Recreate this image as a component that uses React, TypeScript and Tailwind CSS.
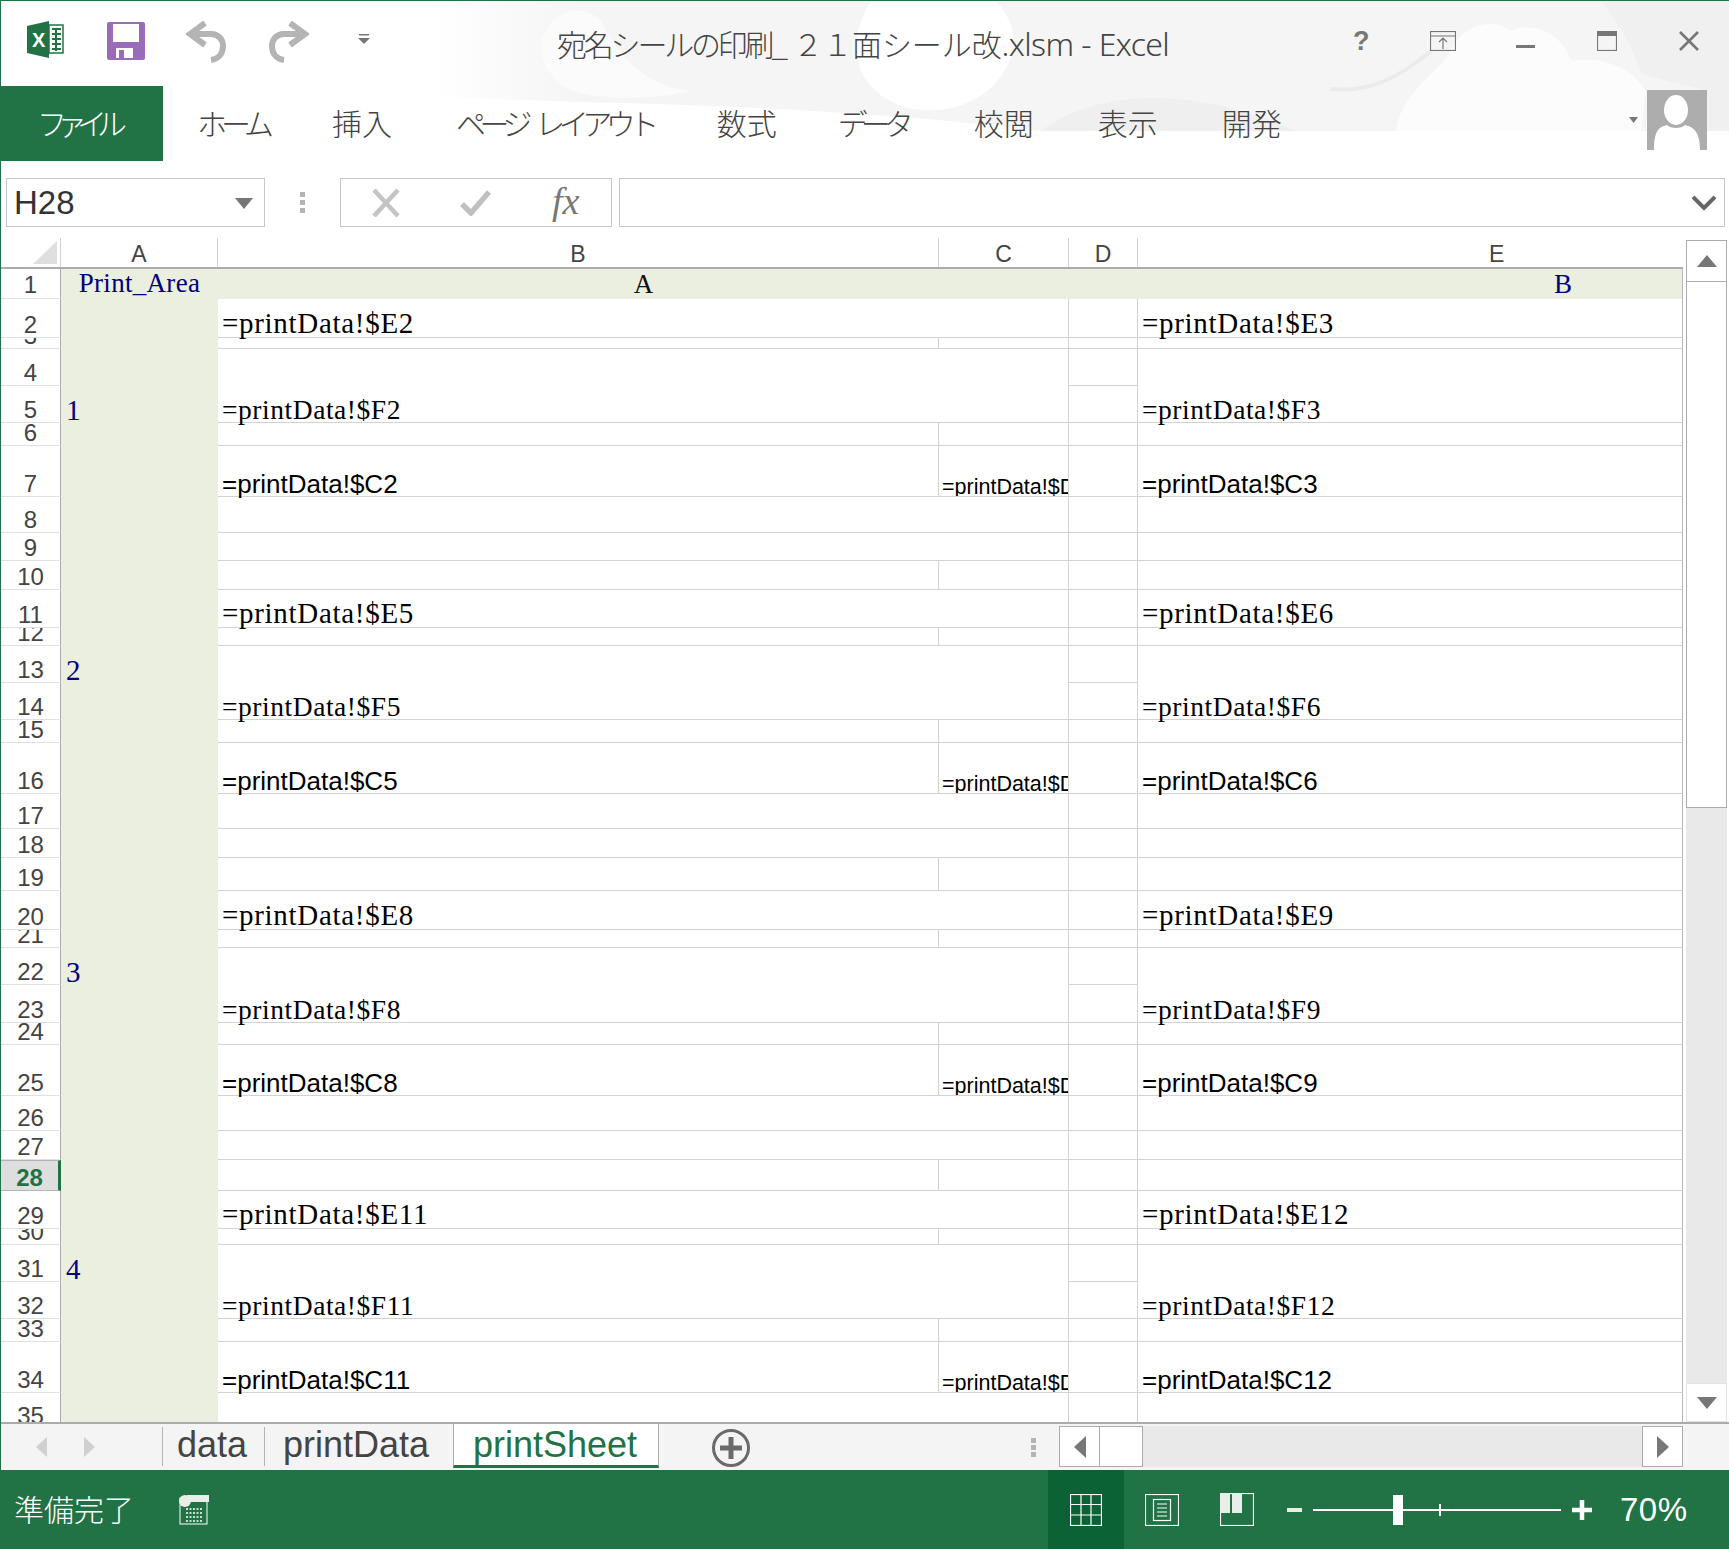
import React from 'react'

const SERIF = "font-['Liberation_Serif',serif]"
const SANS = "font-['Liberation_Sans',sans-serif]"
const JP = "font-['Noto_Sans_CJK_JP','Liberation_Sans',sans-serif]"

type Row = {
  n: number
  h: number
  split?: boolean
  noLine?: boolean
  kind?: 'E' | 'F' | 'C'
  k?: number
  label?: string
}

const ROWS: Row[] = [
  { n: 2, h: 39, kind: 'E', k: 2 },
  { n: 3, h: 11, split: true },
  { n: 4, h: 37, noLine: true },
  { n: 5, h: 37, kind: 'F', k: 2, label: '1' },
  { n: 6, h: 23, split: true },
  { n: 7, h: 51, split: true, kind: 'C', k: 2 },
  { n: 8, h: 36 },
  { n: 9, h: 28 },
  { n: 10, h: 29, split: true },
  { n: 11, h: 38, kind: 'E', k: 5 },
  { n: 12, h: 18, split: true },
  { n: 13, h: 37, noLine: true, label: '2' },
  { n: 14, h: 37, kind: 'F', k: 5 },
  { n: 15, h: 23, split: true },
  { n: 16, h: 51, split: true, kind: 'C', k: 5 },
  { n: 17, h: 35 },
  { n: 18, h: 29 },
  { n: 19, h: 33, split: true },
  { n: 20, h: 39, kind: 'E', k: 8 },
  { n: 21, h: 18, split: true },
  { n: 22, h: 37, noLine: true, label: '3' },
  { n: 23, h: 38, kind: 'F', k: 8 },
  { n: 24, h: 22, split: true },
  { n: 25, h: 51, split: true, kind: 'C', k: 8 },
  { n: 26, h: 35 },
  { n: 27, h: 29 },
  { n: 28, h: 31, split: true },
  { n: 29, h: 38, kind: 'E', k: 11 },
  { n: 30, h: 16, split: true },
  { n: 31, h: 37, noLine: true, label: '4' },
  { n: 32, h: 37, kind: 'F', k: 11 },
  { n: 33, h: 23, split: true },
  { n: 34, h: 51, split: true, kind: 'C', k: 11 },
  // taller than what shows: the tab bar cuts it off
  { n: 35, h: 36 },
]

const TABS = [
  { label: 'ホーム', cls: 'tracking-[-6px]' },
  { label: '挿入', cls: '' },
  { label: 'ページ レイアウト', cls: 'tracking-[-6.5px] [word-spacing:9px]' },
  { label: '数式', cls: '' },
  { label: 'データ', cls: '-ml-[3px] pr-[3px] tracking-[-7px]' },
  { label: '校閲', cls: '' },
  { label: '表示', cls: '' },
  { label: '開発', cls: '' },
]

function CloudTexture() {
  return (
    <svg className="absolute left-0 top-0" width="1729" height="130" viewBox="0 0 1729 130">
      <defs>
        <linearGradient id="fade" x1="430" x2="580" y1="0" y2="0" gradientUnits="userSpaceOnUse">
          <stop offset="0" stopColor="#ffffff" />
          <stop offset="1" stopColor="#f5f5f5" />
        </linearGradient>
      </defs>
      <rect x="430" width="1299" height="130" fill="url(#fade)" />
      <path d="M430 130V95C600 105 800 100 1040 130Z" fill="#fff" />
      <path d="M870 0C845 40 850 85 900 105C950 120 1000 95 1012 50C1016 30 1005 10 995 0Z" fill="#fff" />
      <path d="M540 40C550 10 580 0 600 20C615 50 640 85 690 90C640 100 590 100 560 85C545 70 538 55 540 40Z" fill="#fbfbfb" />
      <path d="M1395 130C1400 90 1440 70 1450 50C1460 25 1490 15 1510 30C1530 20 1560 30 1570 60C1600 55 1630 65 1645 90L1640 130Z" fill="#fcfcfc" />
      <path d="M1040 130C1095 88 1190 84 1295 130Z" fill="#efefef" />
      <path d="M1600 0H1729V130H1706V90C1680 82 1660 80 1640 72C1630 40 1615 20 1600 0Z" fill="#f0f0f0" />
      <path d="M1330 88C1370 92 1400 75 1430 50" fill="none" stroke="#ebebeb" strokeWidth="4" />
    </svg>
  )
}

function QuickAccess() {
  return (
    <div className="flex w-[556px] items-start pt-[20px]">
      <svg className="ml-[26px]" width="37" height="38" viewBox="0 0 37 38">
        <path d="M22 4H36V32H22Z" fill="#fff" stroke="#217346" strokeWidth="1.5" />
        <path d="M25 8H34M25 13H34M25 18H34M25 23H34M25 28H34M29 7V30" stroke="#217346" strokeWidth="2" fill="none" />
        <path d="M0 5L22 0V37L0 32Z" fill="#217346" />
        <text x="5" y="26" fill="#fff" fontSize="20" fontWeight="700" fontFamily="Liberation Sans">X</text>
      </svg>
      <svg className="ml-[43px] mt-[1px]" width="38" height="38" viewBox="0 0 38 38">
        <path d="M2 0H36Q38 0 38 2V36Q38 38 36 38H2Q0 38 0 36V2Q0 0 2 0Z" fill="#9a6bb8" />
        <rect x="6" y="2" width="26" height="18" fill="#fff" />
        <rect x="9" y="26" width="17" height="10" fill="#fff" />
        <rect x="12" y="28" width="5" height="8" fill="#9a6bb8" />
      </svg>
      <svg className="ml-[41px]" width="44" height="42" viewBox="0 0 44 42" fill="none" stroke="#b4b4b4" strokeWidth="6">
        <path d="M19 2L4 13L19 24" />
        <path d="M5 13H25C33 13 37 19 37 25C37 32 33 38 25 39" />
      </svg>
      <svg className="ml-[35px]" width="44" height="42" viewBox="0 0 44 42" fill="none" stroke="#b4b4b4" strokeWidth="6">
        <path d="M25 2L40 13L25 24" />
        <path d="M39 13H19C11 13 7 19 7 25C7 32 11 38 19 39" />
      </svg>
      <svg className="ml-[49px] mt-[13px]" width="13" height="10" viewBox="0 0 13 10">
        <rect x="1" y="0" width="10" height="1.5" fill="#777" />
        <path d="M0 4H12L6 10Z" fill="#777" />
      </svg>
    </div>
  )
}

function WindowControls() {
  return (
    <div className="flex w-[374px] items-start pt-[27px] text-[#777]">
      <span className={`${SANS} ml-[11px] w-[20px] text-[27px] font-bold leading-[27px]`}>?</span>
      <svg className="ml-[57px] mt-[3px]" width="26" height="20" viewBox="0 0 26 20" fill="none" stroke="#777" strokeWidth="1.2">
        <rect x="0.5" y="0.5" width="25" height="19" />
        <path d="M0 5H26M13 18V8M9 11L13 7L17 11" />
      </svg>
      <div className="ml-[60px] mt-[17px] h-[3px] w-[19px] bg-[#777]" />
      <svg className="ml-[62px] mt-[3px]" width="20" height="20" viewBox="0 0 20 20" fill="none" stroke="#777" strokeWidth="1.2">
        <rect x="0.5" y="0.5" width="19" height="19" />
        <rect x="0" y="0" width="20" height="5" fill="#777" stroke="none" />
      </svg>
      <svg className="ml-[62px] mt-[3px]" width="20" height="20" viewBox="0 0 20 20" fill="none" stroke="#777" strokeWidth="2.6">
        <path d="M1 1L19 19M19 1L1 19" />
      </svg>
    </div>
  )
}

function RibbonTabs() {
  return (
    <div className="flex h-[75px] items-stretch">
      <div className={`${JP} flex w-[162px] items-center bg-[#217346] pb-[2px] pl-[36px] text-[30px] font-light tracking-[-10px] text-white`}>
        ファイル
      </div>
      <div className="ml-[34px] flex items-center gap-[64px] pb-[2px]">
        {TABS.map((t) => (
          <span key={t.label} className={`${JP} text-[30px] font-light whitespace-nowrap text-[#444] ${t.cls}`}>
            {t.label}
          </span>
        ))}
      </div>
      <div className="ml-auto flex items-start pt-[4px]">
        <svg className="mt-[27px]" width="9" height="6" viewBox="0 0 9 6">
          <path d="M0 0H9L4.5 6Z" fill="#777" />
        </svg>
        <svg className="ml-[9px] mr-[22px]" width="60" height="60" viewBox="0 0 60 60">
          <rect width="60" height="60" fill="#adadad" />
          <ellipse cx="29" cy="20" rx="12" ry="15" fill="#fff" />
          <path d="M7 60C7 44 10 37 20 35C24 39 34 39 38 35C48 37 53 44 53 60Z" fill="#fff" />
        </svg>
      </div>
    </div>
  )
}

function FormulaBar() {
  return (
    <div className="flex h-[77px] items-start pl-[5px] pt-[17px]">
      <div className={`${SANS} flex h-[49px] w-[259px] items-center border border-[#c6c6c6] bg-white pl-[7px] pt-[1px] text-[33px] text-[#333]`}>
        H28
        <svg className="ml-auto mr-[11px]" width="18" height="11" viewBox="0 0 18 11">
          <path d="M0 0H18L9 11Z" fill="#777" />
        </svg>
      </div>
      <div className="ml-[35px] mt-[14px] flex w-[7px] flex-col gap-[3px]">
        <span className="h-[5px] w-[5px] bg-[#b5b5b5]" />
        <span className="h-[5px] w-[5px] bg-[#b5b5b5]" />
        <span className="h-[5px] w-[5px] bg-[#b5b5b5]" />
      </div>
      <div className="ml-[33px] flex h-[49px] w-[272px] items-center border border-[#c6c6c6] bg-white">
        <svg className="ml-[30px]" width="30" height="28" viewBox="0 0 30 28" fill="none" stroke="#c4c4c4" strokeWidth="4.5">
          <path d="M3 1L27 27M27 1L3 27" />
        </svg>
        <svg className="ml-[59px]" width="32" height="26" viewBox="0 0 32 26" fill="none" stroke="#c0c0c0" strokeWidth="5.5">
          <path d="M2 14L11 23L29 2" />
        </svg>
        <span className={`${SERIF} ml-[60px] pb-[3px] text-[38px] italic leading-none text-[#777]`}>fx</span>
      </div>
      <div className="ml-[7px] flex h-[49px] w-[1106px] items-center border border-[#c6c6c6] bg-white">
        <svg className="ml-auto mr-[8px]" width="24" height="16" viewBox="0 0 24 16" fill="none" stroke="#666" strokeWidth="4">
          <path d="M1 2L12 13L23 2" />
        </svg>
      </div>
    </div>
  )
}

function ColHead({ w, label, cls = '' }: { w: string; label: string; cls?: string }) {
  return (
    <div className={`${SANS} flex h-full ${w} items-end justify-center text-[23px] leading-[25px] text-[#444] ${cls}`}>
      {label}
    </div>
  )
}

function SheetRow({ r }: { r: Row }) {
  const selected = r.n === 28
  const line = 'border-b border-[#d2d2d2]'
  const mainLine = r.noLine ? '' : line
  let mainText = ''
  let rightText = ''
  if (r.kind && r.k) {
    mainText = `=printData!$${r.kind}${r.k}`
    rightText = `=printData!$${r.kind}${r.k + 1}`
  }
  const textCls =
    r.kind === 'E'
      ? `${SERIF} text-[29px] leading-[27px] tracking-[0.7px]`
      : r.kind === 'F'
        ? `${SERIF} text-[27.5px] leading-[24px] tracking-[0.55px]`
        : `${SANS} text-[26px] leading-[23px]`
  const cell = 'flex h-full items-end pl-[4px] whitespace-nowrap text-black'

  return (
    <div className="flex shrink-0" style={{ height: r.h }}>
      <div
        className={`${SANS} flex h-full w-[60px] items-end justify-center overflow-hidden border-r text-[24px] leading-[24px] ${
          selected
            ? 'border-y border-r-[3px] border-y-[#b4b4b4] border-r-[#217346] bg-[#dedede] font-bold text-[#217346]'
            : 'border-b border-b-[#e0e0e0] border-r-[#ababab] text-[#444]'
        }`}
      >
        {r.n}
      </div>
      <div className={`${SERIF} flex h-full w-[157px] items-end bg-[#ebefdf] pl-[5px] text-[29px] leading-[25px] text-[#000080]`}>
        {r.label}
      </div>
      {r.split ? (
        <>
          <div className={`${cell} ${textCls} ${line} w-[721px] border-r border-r-[#d2d2d2]`}>{mainText}</div>
          <div className={`${cell} ${SANS} ${line} w-[130px] overflow-hidden border-r border-r-[#d2d2d2] !pl-[3px] text-[21.5px] leading-[17px]`}>
            {r.kind === 'C' ? `=printData!$D${r.k}` : ''}
          </div>
        </>
      ) : (
        <div className={`${cell} ${textCls} ${mainLine} w-[851px] border-r border-r-[#d2d2d2]`}>{mainText}</div>
      )}
      <div className={`h-full w-[69px] border-r border-r-[#d2d2d2] ${line}`} />
      <div className={`${cell} ${textCls} ${mainLine} w-[545px] border-r border-r-[#b8b8b8]`}>{rightText}</div>
    </div>
  )
}

function Grid() {
  return (
    <div className="flex w-[1682px] flex-col overflow-hidden">
      <div className="flex h-[31px] shrink-0 border-b-2 border-[#ababab]">
        <div className="flex h-full w-[60px] items-end justify-end border-r border-[#d2d2d2] pb-[3px] pr-[3px]">
          <svg width="24" height="23" viewBox="0 0 24 23">
            <path d="M24 0V23H0Z" fill="#dfdfdf" />
          </svg>
        </div>
        <ColHead w="w-[157px]" label="A" cls="border-r border-[#d2d2d2]" />
        <ColHead w="w-[721px]" label="B" cls="border-r border-[#d2d2d2]" />
        <ColHead w="w-[130px]" label="C" cls="border-r border-[#d2d2d2]" />
        <ColHead w="w-[69px]" label="D" cls="border-r border-[#d2d2d2]" />
        <ColHead w="w-[545px]" label="E" cls="!justify-start pl-[351px]" />
      </div>
      <div className="flex h-[30px] shrink-0">
        <div className={`${SANS} flex h-full w-[60px] items-end justify-center border-b border-r border-b-[#e0e0e0] border-r-[#ababab] text-[24px] leading-[27px] text-[#444]`}>
          1
        </div>
        <div className={`${SERIF} flex h-full w-[1622px] items-end border-r border-[#b8b8b8] bg-[#ebefdf] text-[27px] leading-[30px]`}>
          <span className="w-[157px] pb-[1px] text-center tracking-[0.3px] text-[#000080]">Print_Area</span>
          <span className="w-[851px] text-center text-[#111]">A</span>
          <span className="pl-[485px] text-[#000080]">B</span>
        </div>
      </div>
      {ROWS.map((r) => (
        <SheetRow key={r.n} r={r} />
      ))}
    </div>
  )
}

function VScroll() {
  return (
    <div className="ml-[3px] flex w-[41px] flex-col pt-[2px]">
      <div className="flex h-[42px] items-center justify-center border border-[#ababab] bg-white">
        <svg width="20" height="12" viewBox="0 0 20 12">
          <path d="M10 0L20 12H0Z" fill="#777" />
        </svg>
      </div>
      <div className="h-[526px] border-x border-b border-[#ababab] bg-white" />
      <div className="flex-1 bg-[#e9e9e9]" />
      <div className="flex h-[39px] items-center justify-center border border-[#e3e3e3] bg-white">
        <svg width="20" height="12" viewBox="0 0 20 12">
          <path d="M10 12L20 0H0Z" fill="#777" />
        </svg>
      </div>
    </div>
  )
}

function SheetTabs() {
  return (
    <div className={`${SANS} flex h-[48px] items-stretch border-t-2 border-[#ababab] bg-[#f4f4f4] text-[36px] leading-[36px]`}>
      <div className="flex w-[161px] items-center pl-[35px]">
        <svg width="11" height="20" viewBox="0 0 11 20">
          <path d="M11 0V20L0 10Z" fill="#d0d0d0" />
        </svg>
        <svg className="ml-[37px]" width="11" height="20" viewBox="0 0 11 20">
          <path d="M0 0V20L11 10Z" fill="#d0d0d0" />
        </svg>
      </div>
      <div className="my-[3px] mb-[4px] w-[102px] border-l border-[#b4b4b4] pl-[14px] text-[#444]">data</div>
      <div className="my-[3px] mb-[4px] w-[189px] border-l border-[#b4b4b4] pl-[18px] text-[#444]">printData</div>
      <div className="mb-[2px] w-[206px] border-x border-b-[3px] border-x-[#ababab] border-b-[#217346] bg-white pl-[19px] pt-[3px] text-[#217346]">
        printSheet
      </div>
      <svg className="ml-[52px] mt-[4px]" width="40" height="40" viewBox="0 0 40 40">
        <circle cx="20" cy="20" r="17.5" fill="none" stroke="#6a6a6a" strokeWidth="3" />
        <path d="M9 20H31M20 9V31" stroke="#6a6a6a" strokeWidth="5" />
      </svg>
      <div className="ml-[280px] mt-[14px] flex w-[6px] flex-col gap-[2px]">
        <span className="h-[5px] w-[5px] bg-[#b5b5b5]" />
        <span className="h-[5px] w-[5px] bg-[#b5b5b5]" />
        <span className="h-[5px] w-[5px] bg-[#b5b5b5]" />
      </div>
      <div className="ml-[22px] mt-[2px] flex h-[41px] w-[624px] items-stretch">
        <div className="flex w-[41px] items-center justify-center border border-[#ababab] bg-white">
          <svg width="12" height="22" viewBox="0 0 12 22">
            <path d="M12 0V22L0 11Z" fill="#777" />
          </svg>
        </div>
        <div className="w-[43px] border-y border-r border-[#ababab] bg-white" />
        <div className="flex-1 bg-[#e9e9e9]" />
        <div className="flex w-[41px] items-center justify-center border border-[#ababab] bg-white">
          <svg width="12" height="22" viewBox="0 0 12 22">
            <path d="M0 0V22L12 11Z" fill="#777" />
          </svg>
        </div>
      </div>
    </div>
  )
}

function StatusBar() {
  return (
    <div className="flex h-[79px] items-center bg-[#217346] text-white">
      <span className={`${JP} ml-[13px] w-[165px] pb-[3px] text-[30px] font-light leading-none`}>準備完了</span>
      <svg width="30" height="30" viewBox="0 0 30 30">
        <rect x="1" y="3" width="27" height="26" fill="#217346" stroke="#fff" strokeWidth="1" />
        <rect x="8" y="0" width="22" height="7" fill="#e8efe9" />
        <circle cx="6" cy="6" r="6" fill="#e8efe9" />
        <path d="M7 14H24M7 18H24M7 22H24M7 26H24" stroke="#fff" strokeWidth="1.4" strokeDasharray="2 1.5" />
      </svg>
      <div className="ml-[839px] flex h-full w-[76px] items-center justify-center bg-[#0b6235]">
        <svg width="32" height="32" viewBox="0 0 32 32" fill="none" stroke="#fff" strokeWidth="1.2">
          <rect x="0.5" y="0.5" width="31" height="31" />
          <path d="M11 0V32M21 0V32M0 10.5H32M0 21H32" />
        </svg>
      </div>
      <svg className="ml-[21px]" width="34" height="32" viewBox="0 0 34 32" fill="none" stroke="#fff" strokeWidth="1.2">
        <rect x="0.5" y="0.5" width="33" height="31" />
        <rect x="8.5" y="5.5" width="17" height="21" />
        <path d="M12 10H22M12 14H22M12 18H22M12 22H22" />
      </svg>
      <svg className="ml-[41px]" width="34" height="33" viewBox="0 0 34 33" fill="none" stroke="#fff" strokeWidth="1.2">
        <rect x="0.5" y="0.5" width="33" height="32" />
        <rect x="0" y="0" width="10" height="20" fill="#e8efe9" stroke="none" />
        <rect x="12" y="0" width="10" height="20" fill="#e8efe9" stroke="none" />
      </svg>
      <div className="ml-[33px] h-[4px] w-[15px] bg-[#e8efe9]" />
      <div className="ml-[11px] flex h-[30px] w-[248px] items-center">
        <div className="h-[2px] w-[80px] bg-white" />
        <div className="h-[30px] w-[10px] bg-white" />
        <div className="h-[2px] w-[36px] bg-white" />
        <div className="h-[12px] w-[1.5px] bg-white" />
        <div className="h-[2px] flex-1 bg-white" />
      </div>
      <svg className="ml-[11px]" width="20" height="20" viewBox="0 0 20 20">
        <path d="M0 10H20M10 0V20" stroke="#fff" strokeWidth="4.5" />
      </svg>
      <span className={`${SANS} ml-[28px] text-[33px] leading-none tracking-[0.5px]`}>70%</span>
    </div>
  )
}

export default function App() {
  return (
    <div className="relative flex h-[1549px] w-[1729px] flex-col overflow-hidden border-l border-t border-[#217346] bg-white">
      <CloudTexture />
      <div className="relative flex h-[85px] items-start">
        <QuickAccess />
        <div className={`${JP} w-[785px] whitespace-nowrap pt-[22px] text-[30px] font-light leading-[40px] text-[#444]`}>
          <span className="tracking-[-3.2px]">宛名シールの印刷</span>
          <span className="tracking-[5px]">_</span>
          <span className="tracking-[-0.5px]">２１</span>
          <span className="tracking-[-0.1px]">面シール改</span>
          <span className="font-['Noto_Sans','Liberation_Sans',sans-serif] text-[32px] tracking-[-0.6px]">.xlsm - Excel</span>
        </div>
        <WindowControls />
      </div>
      <div className="relative">
        <RibbonTabs />
        <FormulaBar />
      </div>
      <div className="flex h-[1184px] shrink-0 overflow-hidden">
        <Grid />
        <VScroll />
      </div>
      <SheetTabs />
      <StatusBar />
    </div>
  )
}
